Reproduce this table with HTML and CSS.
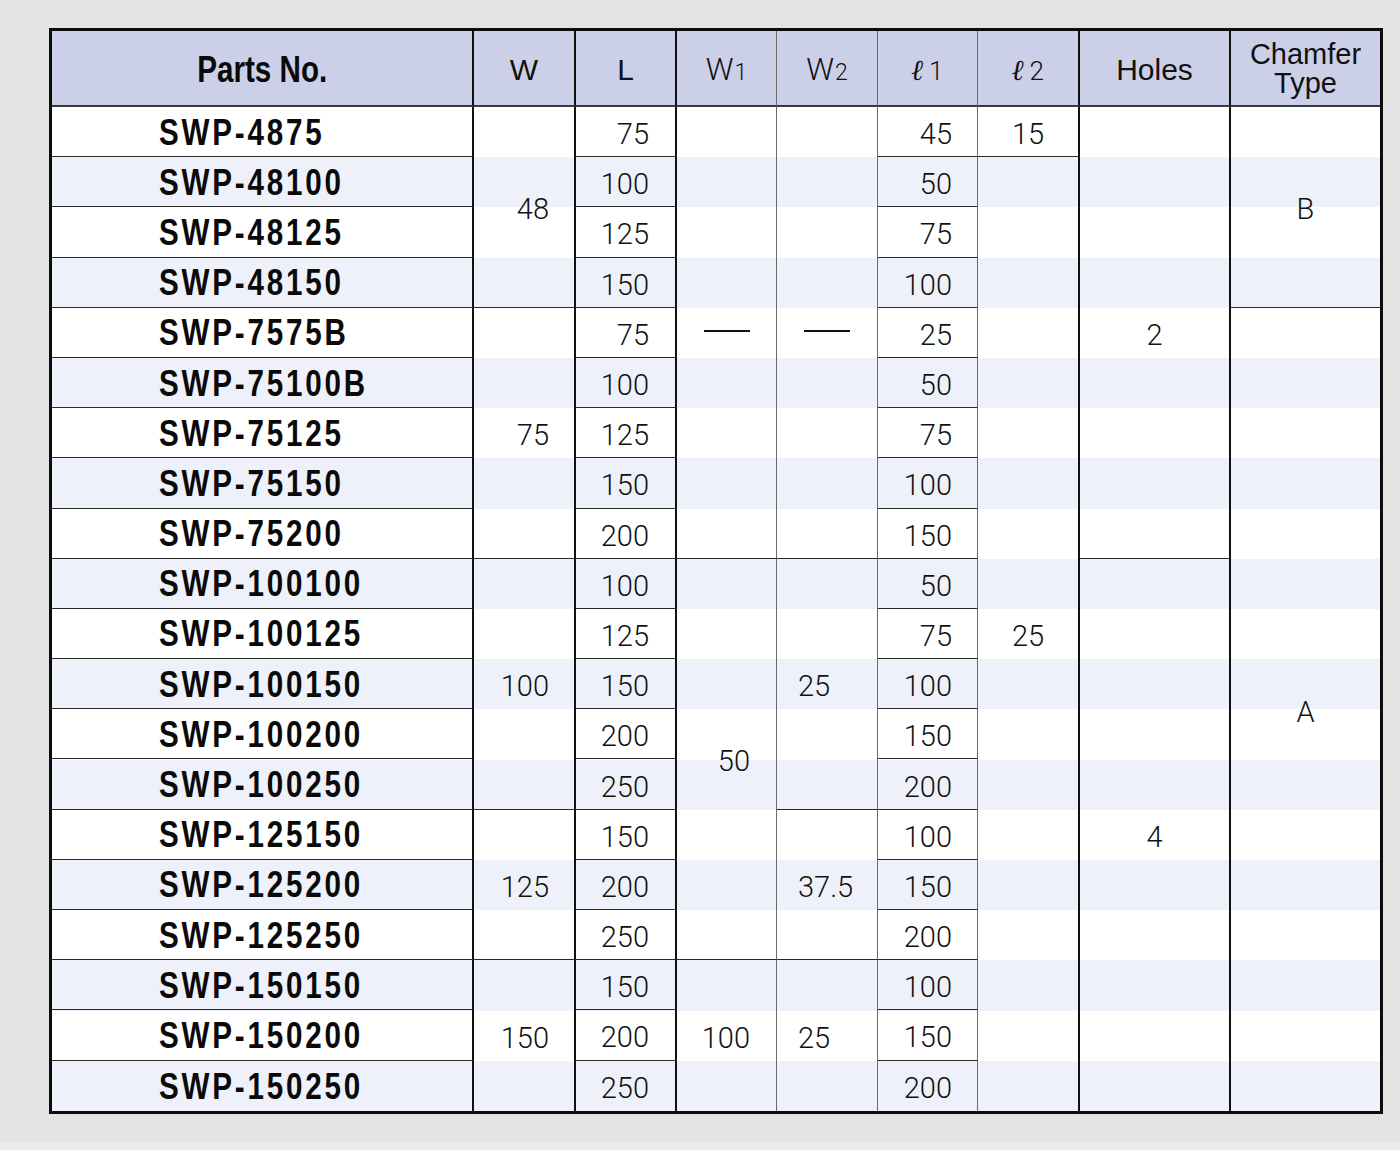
FILE: index.html
```html
<!DOCTYPE html>
<html lang="en">
<head>
<meta charset="utf-8">
<title>SWP Parts Table</title>
<link rel="stylesheet" href="styles.css">
</head>
<body>
<div class="page">
  <div class="sheet">
    <div class="th c1"><span class="pn head">Parts No.</span></div>
    <div class="th c2">W</div>
    <div class="th c3">L</div>
    <div class="th c4 light"><span><span class="big">W</span><span class="sub">1</span></span></div>
    <div class="th c5 light"><span><span class="big">W</span><span class="sub">2</span></span></div>
    <div class="th c6 light"><span><span class="ell">ℓ</span><span class="sub2">1</span></span></div>
    <div class="th c7 light"><span><span class="ell">ℓ</span><span class="sub2">2</span></span></div>
    <div class="th c8">Holes</div>
    <div class="th c9 two">Chamfer<br>Type</div>

    <!-- row 1 -->
    <div class="td c1"><span class="pn">SWP-4875</span></div>
    <div class="td c2 s4">48</div>
    <div class="td c3">75</div>
    <div class="td c4 s9"><span class="dash"></span></div>
    <div class="td c5 s9"><span class="dash dash2"></span></div>
    <div class="td c6">45</div>
    <div class="td c7">15</div>
    <div class="td c8 s9">2</div>
    <div class="td c9 s4">B</div>
    <!-- row 2 -->
    <div class="td c1"><span class="pn">SWP-48100</span></div>
    <div class="td c3">100</div>
    <div class="td c6">50</div>
    <div class="td c7 s19 last">25</div>
    <!-- row 3 -->
    <div class="td c1"><span class="pn">SWP-48125</span></div>
    <div class="td c3">125</div>
    <div class="td c6">75</div>
    <!-- row 4 -->
    <div class="td c1"><span class="pn">SWP-48150</span></div>
    <div class="td c3">150</div>
    <div class="td c6">100</div>
    <!-- row 5 -->
    <div class="td c1"><span class="pn">SWP-7575B</span></div>
    <div class="td c2 s5">75</div>
    <div class="td c3">75</div>
    <div class="td c6">25</div>
    <div class="td c9 s16 last">A</div>
    <!-- row 6 -->
    <div class="td c1"><span class="pn">SWP-75100B</span></div>
    <div class="td c3">100</div>
    <div class="td c6">50</div>
    <!-- row 7 -->
    <div class="td c1"><span class="pn">SWP-75125</span></div>
    <div class="td c3">125</div>
    <div class="td c6">75</div>
    <!-- row 8 -->
    <div class="td c1"><span class="pn">SWP-75150</span></div>
    <div class="td c3">150</div>
    <div class="td c6">100</div>
    <!-- row 9 -->
    <div class="td c1"><span class="pn">SWP-75200</span></div>
    <div class="td c3">200</div>
    <div class="td c6">150</div>
    <!-- row 10 -->
    <div class="td c1"><span class="pn">SWP-100100</span></div>
    <div class="td c2 s5">100</div>
    <div class="td c3">100</div>
    <div class="td c4 s8">50</div>
    <div class="td c5 s5">25</div>
    <div class="td c6">50</div>
    <div class="td c8 s11 last">4</div>
    <!-- row 11 -->
    <div class="td c1"><span class="pn">SWP-100125</span></div>
    <div class="td c3">125</div>
    <div class="td c6">75</div>
    <!-- row 12 -->
    <div class="td c1"><span class="pn">SWP-100150</span></div>
    <div class="td c3">150</div>
    <div class="td c6">100</div>
    <!-- row 13 -->
    <div class="td c1"><span class="pn">SWP-100200</span></div>
    <div class="td c3">200</div>
    <div class="td c6">150</div>
    <!-- row 14 -->
    <div class="td c1"><span class="pn">SWP-100250</span></div>
    <div class="td c3">250</div>
    <div class="td c6">200</div>
    <!-- row 15 -->
    <div class="td c1"><span class="pn">SWP-125150</span></div>
    <div class="td c2 s3">125</div>
    <div class="td c3">150</div>
    <div class="td c5 s3">37.5</div>
    <div class="td c6">100</div>
    <!-- row 16 -->
    <div class="td c1"><span class="pn">SWP-125200</span></div>
    <div class="td c3">200</div>
    <div class="td c6">150</div>
    <!-- row 17 -->
    <div class="td c1"><span class="pn">SWP-125250</span></div>
    <div class="td c3">250</div>
    <div class="td c6">200</div>
    <!-- row 18 -->
    <div class="td c1"><span class="pn">SWP-150150</span></div>
    <div class="td c2 s3 last">150</div>
    <div class="td c3">150</div>
    <div class="td c4 s3 last">100</div>
    <div class="td c5 s3 last">25</div>
    <div class="td c6">100</div>
    <!-- row 19 -->
    <div class="td c1"><span class="pn">SWP-150200</span></div>
    <div class="td c3">200</div>
    <div class="td c6">150</div>
    <!-- row 20 -->
    <div class="td c1 last"><span class="pn">SWP-150250</span></div>
    <div class="td c3 last">250</div>
    <div class="td c6 last">200</div>
  </div>
</div>
</body>
</html>
```

FILE: styles.css
```css
html, body {
  margin: 0;
  padding: 0;
}

body {
  background: #ebebeb;
}

.page {
  box-sizing: border-box;
  height: 1142px;
  padding: 28px 0 0 49px;
  background: #e4e4e4;
}

.sheet {
  box-sizing: border-box;
  width: 1334px;
  display: grid;
  grid-template-columns: 422px 102px 101px 100px 101px 100px 102px 151px 149px;
  grid-template-rows: 76px repeat(20, 50.2px);
  border: 3px solid #0c0c0c;
  background-color: #ffffff;
  background-image: repeating-linear-gradient(to bottom,
      #ffffff 0, #ffffff 50.2px,
      #eef1f9 50.2px, #eef1f9 100.4px);
  background-position: 0 76px;
  color: #111;
}

.th,
.td {
  box-sizing: border-box;
  display: flex;
  align-items: center;
  min-width: 0;
}

.th {
  justify-content: center;
  background: #cbd0e8;
  border-bottom: 2px solid #3a3a3a;
  font-family: "Liberation Sans", Arial, sans-serif;
  font-size: 30px;
  padding-top: 3px;
}

.td {
  border-bottom: 1px solid #2a2a2a;
  font-family: Roboto, "Liberation Sans", sans-serif;
  font-weight: 300;
  font-size: 29px;
  padding-top: 5px;
}

.td.last {
  border-bottom: none;
}

/* columns */
.c1 { grid-column: 1; border-right: 2px solid #111; }
.c2 { grid-column: 2; border-right: 2px solid #111; }
.c3 { grid-column: 3; border-right: 2px solid #111; }
.c4 { grid-column: 4; border-right: 1px solid #6a6a6a; }
.c5 { grid-column: 5; border-right: 1px solid #6a6a6a; }
.c6 { grid-column: 6; border-right: 1px solid #6a6a6a; }
.c7 { grid-column: 7; border-right: 2px solid #111; }
.c8 { grid-column: 8; border-right: 2px solid #111; }
.c9 { grid-column: 9; }

/* row spans */
.s3 { grid-row: span 3; }
.s4 { grid-row: span 4; }
.s5 { grid-row: span 5; }
.s8 { grid-row: span 8; }
.s9 { grid-row: span 9; }
.s11 { grid-row: span 11; }
.s16 { grid-row: span 16; }
.s19 { grid-row: span 19; }

/* part numbers: condensed bold */
.td.c1 {
  padding-left: 107px;
  padding-top: 2px;
}

.pn {
  display: inline-block;
  font-family: "Liberation Sans", Arial, sans-serif;
  font-weight: 700;
  font-size: 37px;
  letter-spacing: 3.5px;
  color: #0a0a0a;
  white-space: nowrap;
  transform: scaleX(0.8);
  transform-origin: left center;
}

.pn.head {
  letter-spacing: 0;
  transform-origin: center center;
}

.td.c2,
.td.c3,
.td.c4,
.td.c6 {
  justify-content: flex-end;
  padding-right: 25px;
}

.td.c3,
.td.c4 {
  padding-right: 26px;
}

.td.c5 {
  justify-content: flex-start;
  padding-left: 21px;
}

.td.c7,
.td.c8,
.td.c9 {
  justify-content: center;
}

.td.c4.s9,
.td.c5.s9 {
  padding-top: 0;
}

.dash {
  display: block;
  width: 46px;
  height: 2px;
  background: #111;
  margin-bottom: 3px;
}

.dash2 {
  margin-left: 6px;
}

/* header details */
.th.light {
  font-family: Roboto, "Liberation Sans", sans-serif;
  font-weight: 300;
}

.big {
  font-size: 31px;
}

.sub {
  font-size: 23px;
  margin-left: 1px;
}

.ell {
  font-family: "DejaVu Serif", "Liberation Serif", serif;
  font-style: italic;
  font-weight: 700;
  font-size: 29px;
}

.sub2 {
  font-size: 26px;
  margin-left: 5px;
}

.two {
  text-align: center;
  line-height: 29px;
  font-size: 29px;
  padding-top: 1px;
}
```
